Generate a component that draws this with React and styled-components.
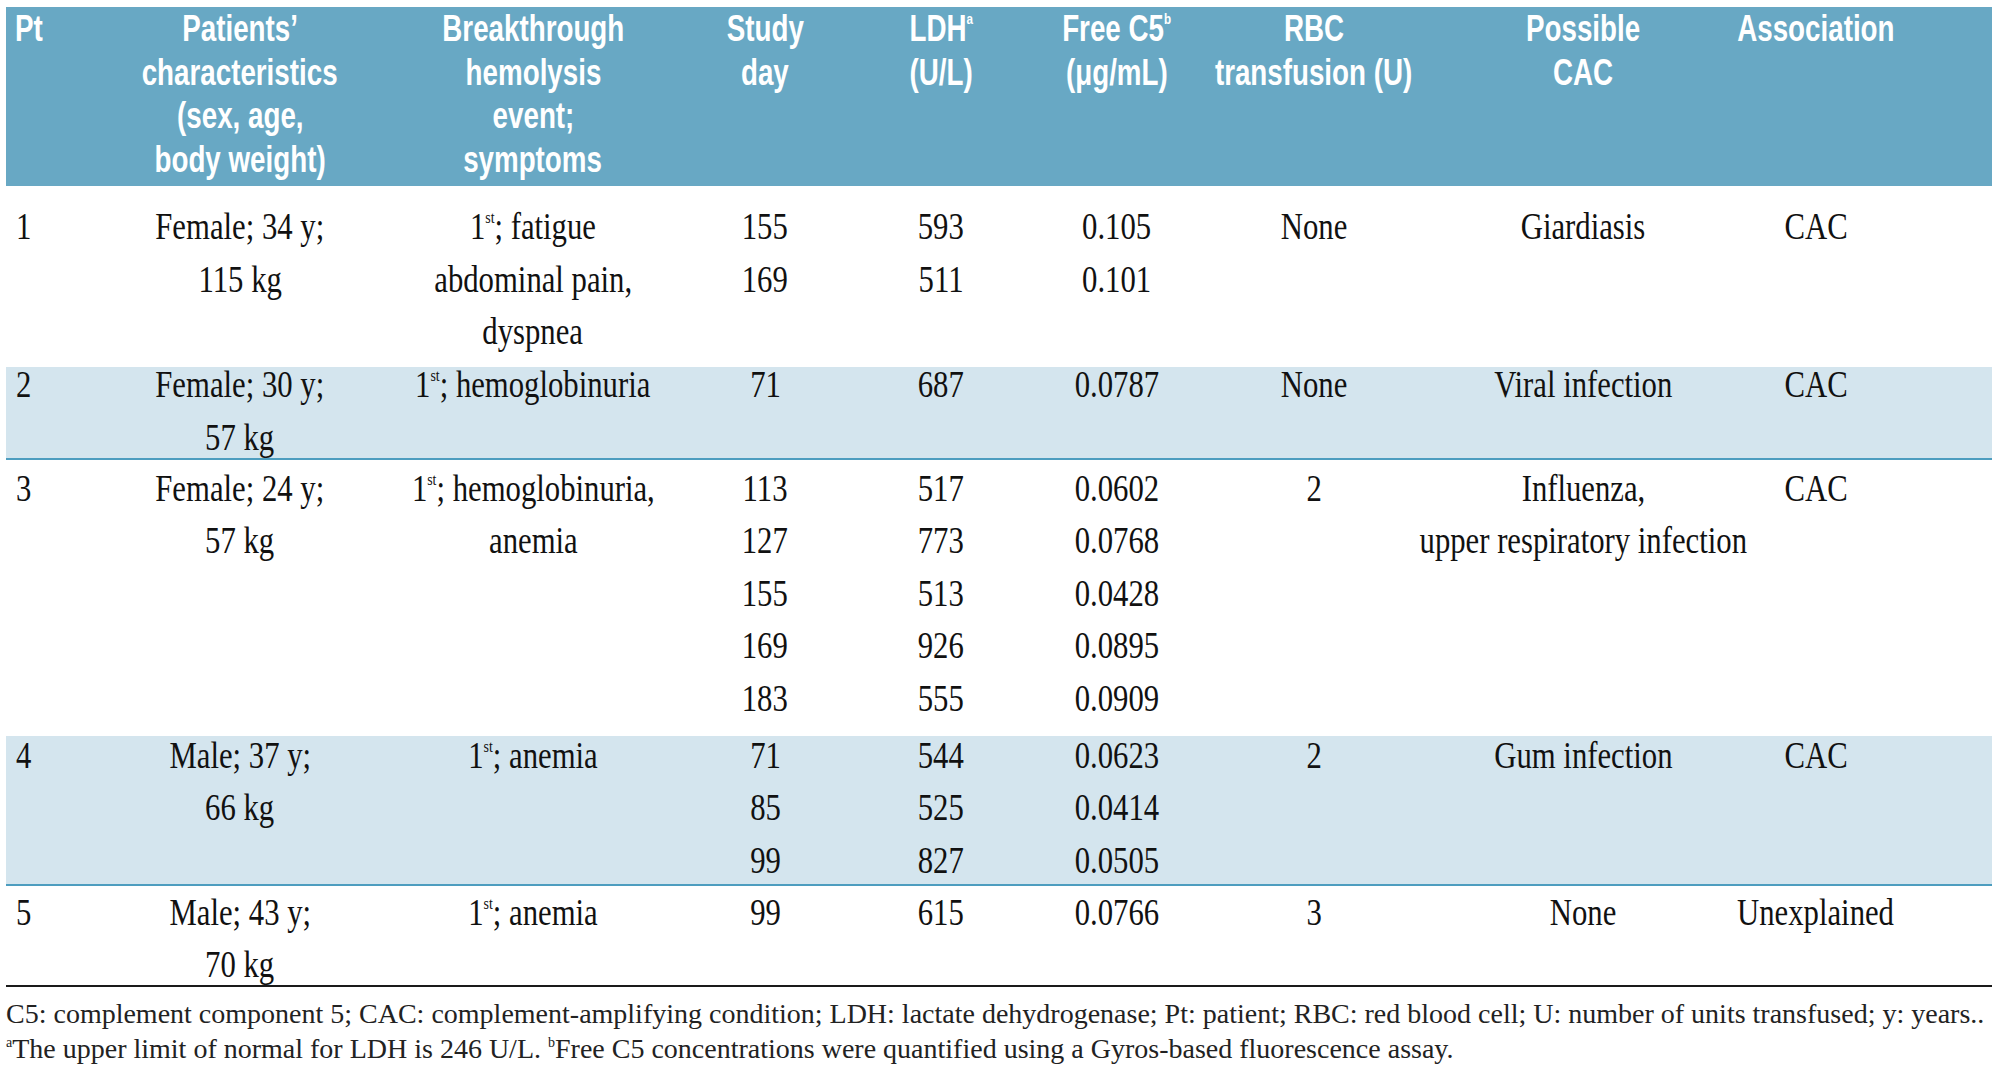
import styled, { createGlobalStyle } from "styled-components";

const GlobalStyle = createGlobalStyle`
  html, body {
    margin: 0;
    padding: 0;
    background: #fff;
  }
`;

const COLUMNS = "104px 260px 326px 138px 214px 138px 256px 282px 268px";

const headers = [
  { left: true, lines: ["Pt"] },
  { lines: ["Patients’", "characteristics", "(sex, age,", "body weight)"] },
  { lines: ["Breakthrough", "hemolysis", "event;", "symptoms"] },
  { lines: ["Study", "day"] },
  { lines: [<>LDH<sup>a</sup></>, "(U/L)"] },
  { lines: [<>Free C5<sup>b</sup></>, "(μg/mL)"] },
  { lines: ["RBC", "transfusion (U)"] },
  { lines: ["Possible", "CAC"] },
  { lines: ["Association"], last: true },
];

const first = (rest) => (
  <>
    1<sup>st</sup>
    {rest}
  </>
);

const rows = [
  {
    pad: [23, 15],
    cells: [
      ["1"],
      ["Female; 34 y;", "115 kg"],
      [first("; fatigue"), "abdominal pain,", "dyspnea"],
      ["155", "169"],
      ["593", "511"],
      ["0.105", "0.101"],
      ["None"],
      ["Giardiasis"],
      ["CAC"],
    ],
  },
  {
    shaded: true,
    pad: [0, 2],
    cells: [
      ["2"],
      ["Female; 30 y;", "57 kg"],
      [first("; hemoglobinuria")],
      ["71"],
      ["687"],
      ["0.0787"],
      ["None"],
      ["Viral infection"],
      ["CAC"],
    ],
  },
  {
    pad: [11, 17],
    cells: [
      ["3"],
      ["Female; 24 y;", "57 kg"],
      [first("; hemoglobinuria,"), "anemia"],
      ["113", "127", "155", "169", "183"],
      ["517", "773", "513", "926", "555"],
      ["0.0602", "0.0768", "0.0428", "0.0895", "0.0909"],
      ["2"],
      ["Influenza,", "upper respiratory infection"],
      ["CAC"],
    ],
  },
  {
    shaded: true,
    pad: [2, 5],
    cells: [
      ["4"],
      ["Male; 37 y;", "66 kg"],
      [first("; anemia")],
      ["71", "85", "99"],
      ["544", "525", "827"],
      ["0.0623", "0.0414", "0.0505"],
      ["2"],
      ["Gum infection"],
      ["CAC"],
    ],
  },
  {
    pad: [9, 0],
    cells: [
      ["5"],
      ["Male; 43 y;", "70 kg"],
      [first("; anemia")],
      ["99"],
      ["615"],
      ["0.0766"],
      ["3"],
      ["None"],
      ["Unexplained"],
    ],
  },
];

export default function App() {
  return (
    <Page>
      <GlobalStyle />
      <Table>
        <HeaderRow>
          {headers.map((h, i) => (
            <HeadCell key={i} $left={h.left} $last={h.last}>
              {h.lines.map((l, j) => (
                <HeadLine key={j} $left={h.left}>
                  {l}
                </HeadLine>
              ))}
            </HeadCell>
          ))}
        </HeaderRow>
        {rows.map((r, i) => (
          <BodyRow key={i} $shaded={r.shaded} $pt={r.pad[0]} $pb={r.pad[1]}>
            {r.cells.map((c, j) => (
              <BodyCell key={j} $left={j === 0} $last={j === 8}>
                {c.map((l, k) => (
                  <BodyLine key={k} $left={j === 0}>
                    {l}
                  </BodyLine>
                ))}
              </BodyCell>
            ))}
          </BodyRow>
        ))}
      </Table>
      <Notes>
        <p>
          C5: complement component 5; CAC: complement-amplifying condition;
          LDH: lactate dehydrogenase; Pt: patient; RBC: red blood cell; U:
          number of units transfused; y: years..
        </p>
        <p>
          <sup>a</sup>The upper limit of normal for LDH is 246 U/L.{" "}
          <sup>b</sup>Free C5 concentrations were quantified using a
          Gyros-based fluorescence assay.
        </p>
      </Notes>
    </Page>
  );
}

const Page = styled.div`
  padding: 7px 8px 0 6px;
  width: 1986px;
`;

const Table = styled.div`
  display: flex;
  flex-direction: column;
  border-bottom: 2px solid #1a1a1a;
`;

const HeaderRow = styled.div`
  display: grid;
  grid-template-columns: ${COLUMNS};
  height: 179px;
  background: #68a8c4;
`;

const HeadCell = styled.div`
  display: flex;
  flex-direction: column;
  align-items: ${(p) => (p.$left ? "flex-start" : "center")};
  padding-left: ${(p) => (p.$left ? "9px" : "0")};
  padding-right: ${(p) => (p.$last ? "84px" : "0")};
`;

const HeadLine = styled.span`
  white-space: nowrap;
  font-family: "Liberation Sans", Arial, sans-serif;
  font-weight: 700;
  font-size: 37px;
  line-height: 43.5px;
  color: #fff;
  transform: scaleX(0.75);
  transform-origin: ${(p) => (p.$left ? "left" : "center")};

  sup {
    font-size: 0.42em;
    line-height: 0;
    vertical-align: 17px;
  }
`;

const BodyRow = styled.div`
  display: grid;
  grid-template-columns: ${COLUMNS};
  padding: ${(p) => p.$pt}px 0 ${(p) => p.$pb}px;
  background: ${(p) => (p.$shaded ? "#d4e5ee" : "#fff")};
  border-bottom: 2px solid ${(p) => (p.$shaded ? "#4d9dbf" : "transparent")};
`;

const BodyCell = styled.div`
  display: flex;
  flex-direction: column;
  gap: 16.5px;
  align-items: ${(p) => (p.$left ? "flex-start" : "center")};
  padding-left: ${(p) => (p.$left ? "10px" : "0")};
  padding-right: ${(p) => (p.$last ? "84px" : "0")};
`;

const BodyLine = styled.span`
  white-space: nowrap;
  font-family: "Liberation Serif", "Times New Roman", serif;
  font-size: 37px;
  line-height: 36px;
  color: #111;
  transform: scaleX(0.83);
  transform-origin: ${(p) => (p.$left ? "left" : "center")};

  sup {
    font-size: 0.45em;
    line-height: 0;
    vertical-align: 0.95em;
  }
`;

const Notes = styled.div`
  padding-top: 9px;
  font-family: "Liberation Serif", "Times New Roman", serif;
  font-size: 28px;
  line-height: 35px;
  color: #222;

  p {
    margin: 0;
    white-space: nowrap;
  }

  sup {
    font-size: 0.5em;
    line-height: 0;
    vertical-align: 11px;
  }
`;
